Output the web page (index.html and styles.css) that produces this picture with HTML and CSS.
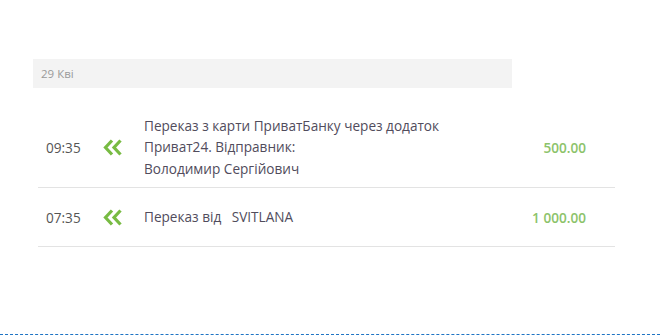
FILE: index.html
```html
<!DOCTYPE html>
<html lang="uk">
<head>
<meta charset="utf-8">
<link rel="stylesheet" href="styles.css">
</head>
<body>
<div class="page">
  <div class="date-bar">29 Кві</div>
  <div class="list">
    <div class="row row-tall">
      <div class="time">09:35</div>
      <div class="icon">
        <svg width="20" height="17" viewBox="0 0 20 17"><path d="M9 1.5 L2.5 8.5 L9 15.5 M17.5 1.5 L11 8.5 L17.5 15.5" fill="none" stroke="#78bb43" stroke-width="3.2" stroke-linejoin="miter"/></svg>
      </div>
      <div class="desc">Переказ з карти ПриватБанку через додаток Приват24. Відправник:<br>Володимир Сергійович</div>
      <div class="amount">500.00</div>
    </div>
    <div class="row">
      <div class="time">07:35</div>
      <div class="icon">
        <svg width="20" height="17" viewBox="0 0 20 17"><path d="M9 1.5 L2.5 8.5 L9 15.5 M17.5 1.5 L11 8.5 L17.5 15.5" fill="none" stroke="#78bb43" stroke-width="3.2" stroke-linejoin="miter"/></svg>
      </div>
      <div class="desc">Переказ від <span class="name">SVITLANA</span></div>
      <div class="amount">1 000.00</div>
    </div>
  </div>
</div>
<div class="dashed"></div>
</body>
</html>
```
FILE: styles.css
```css
html, body {
  margin: 0;
  padding: 0;
  background: #fff;
  font-family: "Open Sans", "Liberation Sans", sans-serif;
}
.page {
  height: 334px;
  padding-top: 59px;
  box-sizing: border-box;
}
.date-bar {
  margin-left: 33px;
  width: 471px;
  height: 29px;
  background: #f3f3f3;
  color: #9a9a9a;
  font-size: 11.5px;
  line-height: 29px;
  padding-left: 8px;
}
.list {
  margin-left: 38px;
  width: 577px;
  margin-top: 19px;
}
.row {
  display: flex;
  align-items: center;
  height: 58px;
  border-bottom: 1px solid #e3e3e3;
  padding-left: 8px;
  padding-right: 29px;
  color: #555;
  font-size: 13.6px;
}
.row-tall {
  height: 80px;
}
.time {
  width: 57px;
  flex: none;
  color: #555;
}
.icon {
  width: 41px;
  flex: none;
  display: flex;
  align-items: center;
}
.icon svg {
  display: block;
}
.desc {
  width: 302px;
  flex: none;
  line-height: 21.5px;
  color: #514c5c;
}
.name {
  margin-left: 7px;
}
.amount {
  flex: 1;
  text-align: right;
  color: #8cc36a;
  font-weight: 600;
}
.dashed {
  border-top: 1px dashed #1f74c4;
  height: 1px;
}
```
